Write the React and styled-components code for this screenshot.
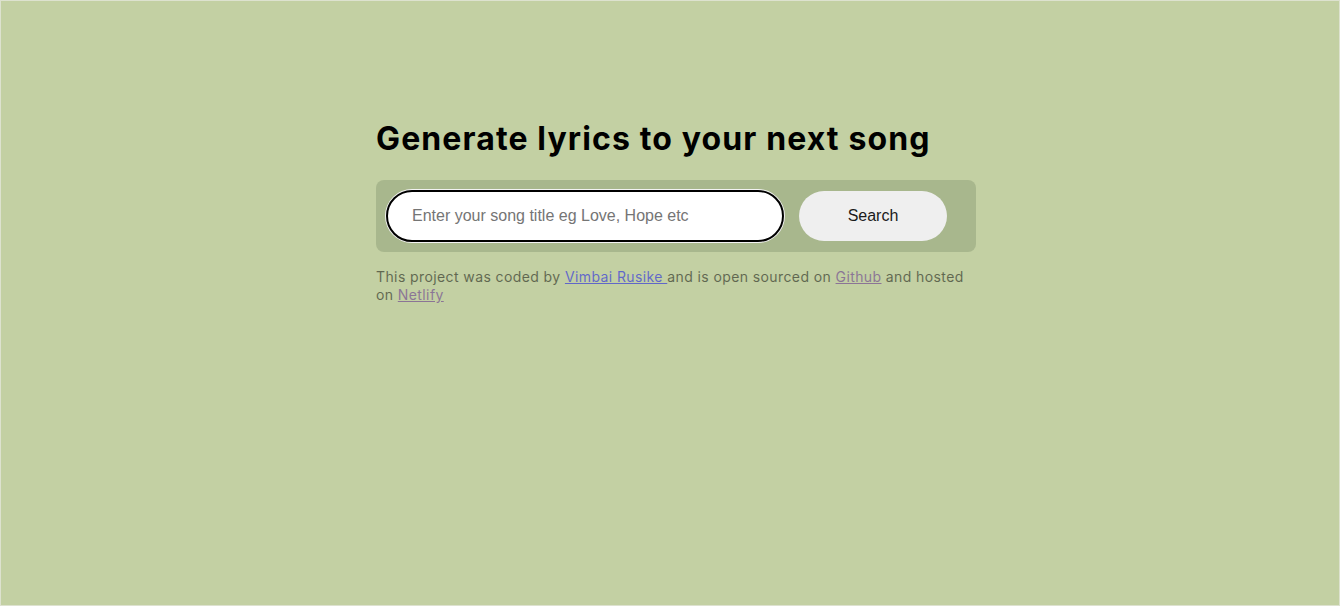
import React from "react";
import styled, { createGlobalStyle } from "styled-components";

const Global = createGlobalStyle`
  html, body { margin: 0; padding: 0; }
  body { background: #c3d0a3; }
  * { box-sizing: border-box; }
`;

const Page = styled.div`
  width: 1340px;
  height: 606px;
  border: 1px solid #dde2cf;
  background: #c3d0a3;
  display: flex;
  justify-content: center;
  padding-left: 12px;
  padding-top: 118px;
  font-family: Inter, "Noto Sans", sans-serif;
`;

const Column = styled.main`
  width: 600px;
  display: flex;
  flex-direction: column;
`;

const Title = styled.h1`
  margin: 0 0 21px 0;
  font-size: 32px;
  font-weight: 700;
  line-height: 40px;
  color: #000;
  letter-spacing: 1.12px;
`;

const SearchBar = styled.form`
  background: #a8b78d;
  border-radius: 8px;
  height: 72px;
  padding: 10px 29px 10px 10px;
  display: flex;
  align-items: center;
  gap: 15px;
`;

const Input = styled.input`
  width: 398px;
  height: 52px;
  border: 2px solid #000;
  border-radius: 26px;
  background: #fff;
  padding: 0 24px;
  font-family: Arial, "Liberation Sans", sans-serif;
  font-size: 16px;
  color: #000;
  outline: none;
  box-shadow: 0 0 0 1px #f3f3f3;
  &::placeholder { color: #757575; }
`;

const Button = styled.button`
  width: 148px;
  height: 50px;
  border: none;
  border-radius: 25px;
  background: #efefef;
  font-family: Arial, "Liberation Sans", sans-serif;
  font-size: 16px;
  color: #1a1a1a;
  margin-left: auto;
`;

const Footer = styled.p`
  margin: 16px 0 0 0;
  font-size: 14px;
  line-height: 18px;
  color: #000;
  opacity: 0.5;
  letter-spacing: 0.4px;
`;

const Link = styled.a`
  color: ${(p) => (p.$visited ? "#551a8b" : "#0000ee")};
  text-decoration: underline;
`;

export default function App() {
  return (
    <>
      <Global />
      <Page>
        <Column>
          <Title>Generate lyrics to your next song</Title>
          <SearchBar onSubmit={(e) => e.preventDefault()}>
            <Input type="search" placeholder="Enter your song title eg Love, Hope etc" />
            <Button type="submit">Search</Button>
          </SearchBar>
          <Footer>
            This project was coded by <Link href="#">Vimbai Rusike </Link>and is open sourced on{" "}
            <Link $visited href="#">Github</Link> and hosted on <Link $visited href="#">Netlify</Link>
          </Footer>
        </Column>
      </Page>
    </>
  );
}
